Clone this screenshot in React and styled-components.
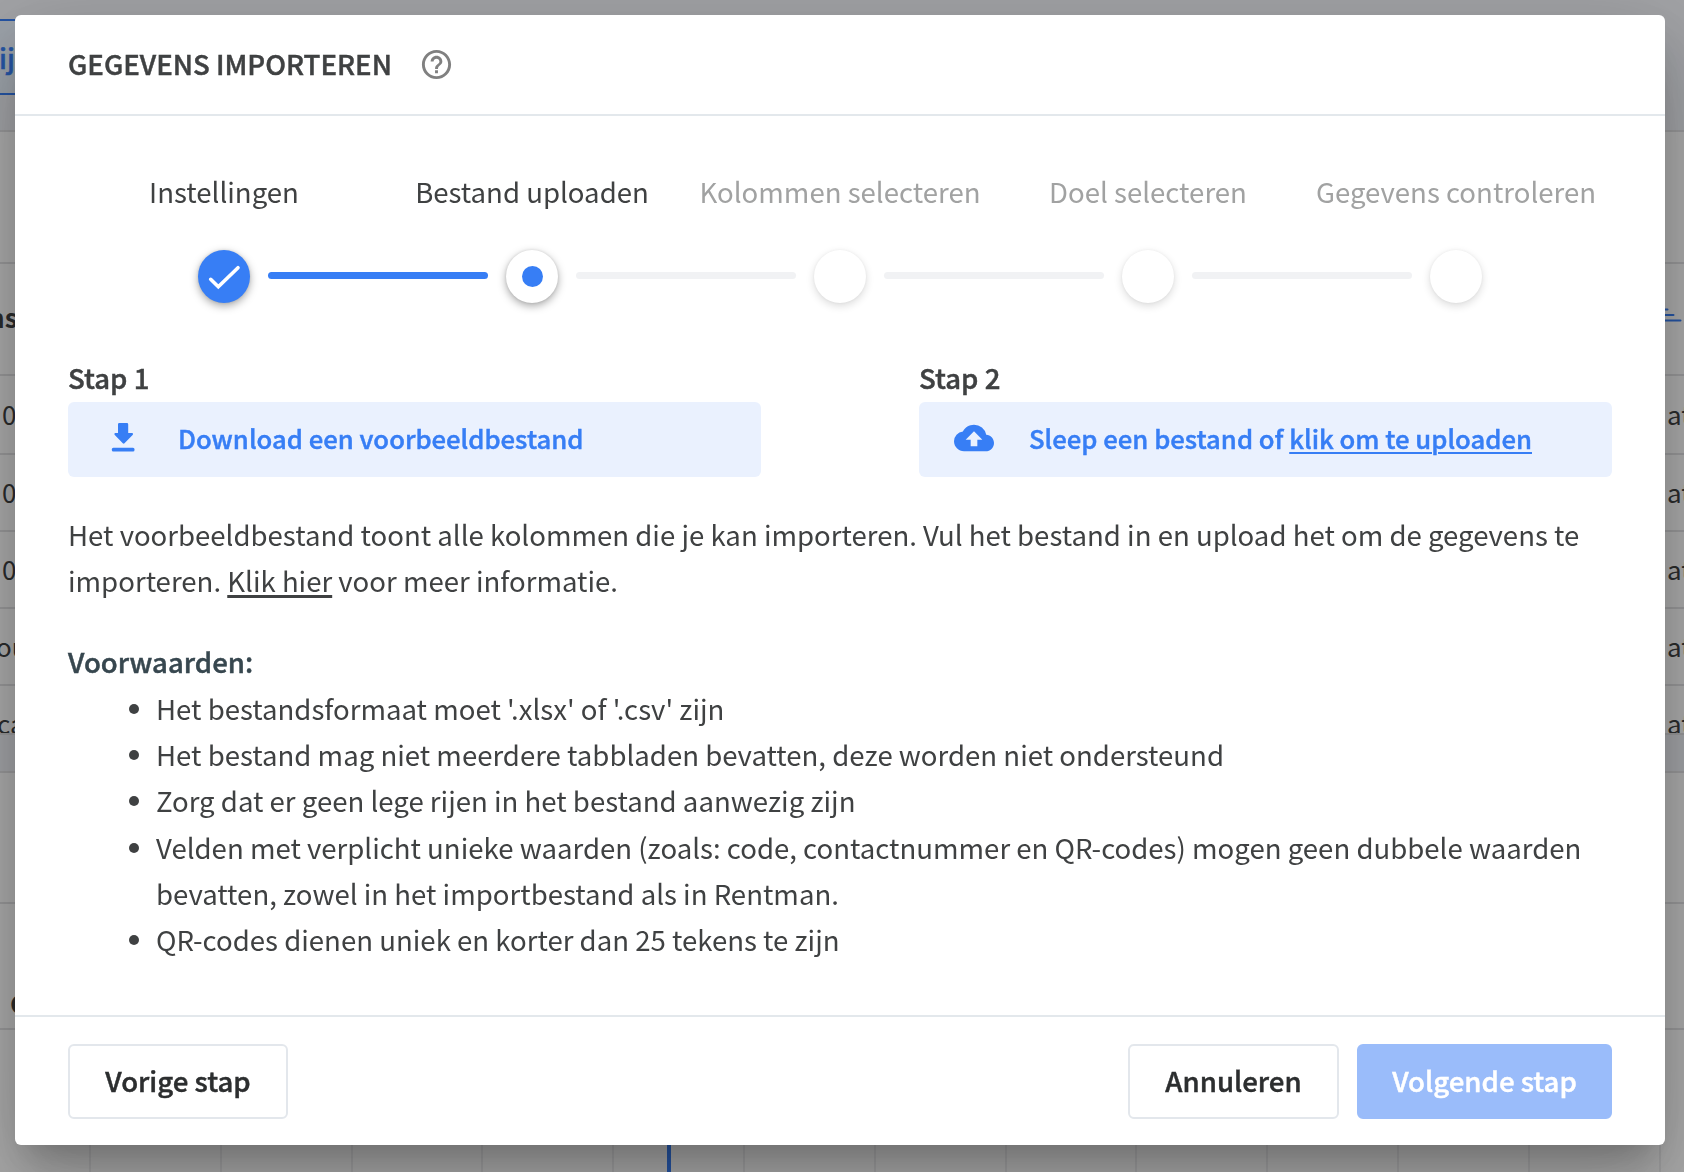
import React from "react";
import styled, { createGlobalStyle, css } from "styled-components";
import { MdHelpOutline, MdCloudUpload } from "react-icons/md";

const FONT = '"Noto Sans CJK SC", "Noto Sans", sans-serif';
const BLUE = "#377ef5";
const SIZE = "27.58px";

/* medium weight thickened slightly to a semibold */
const semibold = css`
  font-weight: 500;
  -webkit-text-stroke: 0.45px currentColor;
`;

const GlobalStyle = createGlobalStyle`
  * { box-sizing: border-box; }
  body { margin: 0; overflow: hidden; background: #fff; font-family: ${FONT}; font-size: ${SIZE}; color: #3f4142; }
`;

/* page underneath the dialog */
const Page = styled.div`
  width: 1684px;
  height: 1172px;
  display: flex;
  flex-direction: column;
  overflow: hidden;
  background: #fff;
`;
const Band = styled.div`
  flex: none;
  height: ${(p) => p.$h}px;
  display: flex;
  justify-content: space-between;
  align-items: ${(p) => p.$align || "center"};
  background: ${(p) => (p.$tint ? "#f1f3f8" : "#fff")};
  border-bottom: 2px solid #e2e2e4;
  overflow: hidden;
`;
const EdgeLeft = styled.span`
  margin: 0 0 ${(p) => p.$lift ?? 2}px ${(p) => p.$x}px;
  white-space: nowrap;
  font-weight: ${(p) => (p.$bold ? 700 : 400)};
  font-size: 26px;
`;
const EdgeRight = styled.span`
  width: 17px;
  margin-bottom: ${(p) => p.$lift ?? 2}px;
  white-space: nowrap;
  font-size: 26px;
`;
const GhostButton = styled.span`
  width: 60px;
  height: 76px;
  margin: 0 0 35px -45px;
  display: flex;
  align-items: center;
  justify-content: flex-end;
  border: 2px solid ${BLUE};
  border-right: 0;
  background: #eaf3fd;
  color: ${BLUE};
  ${semibold}
`;
const SortIcon = styled.svg`
  width: 19px;
  height: 16px;
  margin-bottom: 8px;
`;
const Timeline = styled.div`
  flex: 1;
  display: flex;
  padding-left: 89px;
`;
const TimeCell = styled.div`
  flex: none;
  width: 130.8px;
  border-left: 2px solid #eeeef0;
`;
const NowLine = styled.div`
  width: 4px;
  height: 100%;
  margin-left: ${(p) => p.$x}px;
  background: ${BLUE};
`;

/* dialog */
const Overlay = styled.div`
  position: fixed;
  inset: 0;
  padding: 15px 19px 27px 15px;
  display: flex;
  background: rgba(0, 0, 0, 0.33);
`;
const Dialog = styled.section`
  flex: 1;
  min-width: 0;
  display: flex;
  flex-direction: column;
  background: #fff;
  border-radius: 6px;
  box-shadow: 0 22px 30px -14px rgba(0, 0, 0, 0.2), 0 48px 76px 6px rgba(0, 0, 0, 0.14),
    0 18px 92px 16px rgba(0, 0, 0, 0.12);
`;
const Header = styled.header`
  height: 101px;
  padding: 0 53px 1px;
  display: flex;
  align-items: center;
  gap: 27px;
  border-bottom: 2px solid #e3e8ec;
`;
const Title = styled.h1`
  margin: 0;
  padding-bottom: 3px;
  font-size: ${SIZE};
  line-height: 40px;
  ${semibold}
`;
const HelpIcon = styled(MdHelpOutline)`
  width: 35px;
  height: 35px;
  color: #808080;
`;
const Body = styled.main`
  flex: 1;
  padding: 53px 53px 0;
`;
const Stepper = styled.ol`
  margin: 0 2px;
  padding: 0;
  list-style: none;
  display: grid;
  grid-template-columns: repeat(5, 308px);
`;
const Step = styled.li`
  display: flex;
  flex-direction: column;
  align-items: center;
  white-space: nowrap;
  color: ${(p) => (p.$muted ? "#a1a2a2" : "#3f4142")};
`;
const StepLabel = styled.span`
  height: 46px;
  line-height: 44px;
`;
const Track = styled.div`
  width: 308px;
  margin-top: 35px;
  height: 53px;
  display: grid;
  grid-template-columns: 110px 52px 110px;
  justify-content: space-between;
  align-items: center;
`;
const HalfLine = styled.i`
  height: 7px;
  margin-bottom: 2px;
  background: ${(p) => (p.$show ? (p.$done ? BLUE : "#f1f2f4") : "transparent")};
  border-radius: ${(p) => (p.$end ? "0 4px 4px 0" : "4px 0 0 4px")};
`;
const Dot = styled.div`
  width: 52px;
  height: 53px;
  display: flex;
  align-items: center;
  justify-content: center;
  border-radius: 50%;
  background: ${(p) => (p.$done ? BLUE : "#fff")};
  box-shadow: ${(p) =>
    p.$muted
      ? "0 3px 8px rgba(0,0,0,.14), 0 0 3px rgba(0,0,0,.05)"
      : "0 3px 9px rgba(0,0,0,.34), 0 0 3px rgba(0,0,0,.1)"};
`;
const ActiveDot = styled.i`
  width: 21px;
  height: 21px;
  border-radius: 50%;
  background: ${BLUE};
`;
const Check = styled.svg`
  width: 52px;
  height: 52px;
`;
const Columns = styled.div`
  margin-top: 53px;
  display: grid;
  grid-template-columns: 693px 693px;
  justify-content: space-between;
`;
const ColumnTitle = styled.div`
  height: 46px;
  line-height: 43px;
  ${semibold}
`;
const ActionBox = styled.div`
  height: 75px;
  padding: 0 0 4px 33px;
  display: flex;
  align-items: center;
  gap: 34px;
  border-radius: 6px;
  background: #eaf1fe;
  color: ${BLUE};
  font-size: 25.68px;
  white-space: nowrap;
  ${semibold}
`;
const IconSlot = styled.span`
  width: 43px;
  display: flex;
  justify-content: center;
`;
const Underlined = styled.span`
  text-decoration: underline;
  text-decoration-thickness: ${(p) => p.$thick || 2}px;
  text-underline-offset: 3px;
`;
const Paragraph = styled.p`
  margin: 34px 0 0;
  line-height: 46px;
  white-space: nowrap;
`;
const Subheading = styled.h2`
  margin: 35px 0 0;
  font-size: ${SIZE};
  line-height: 46px;
  color: #37474f;
  ${semibold}
`;
const List = styled.ul`
  margin: 1px 0 0;
  padding: 0 0 0 61px;
  list-style: none;
`;
const Item = styled.li`
  display: flex;
  gap: 17px;
  line-height: 46.2px;
  white-space: nowrap;
`;
const Bullet = styled.i`
  flex: none;
  width: 10px;
  height: 10px;
  margin-top: 19px;
  border-radius: 50%;
  background: #3f4142;
`;
const Footer = styled.footer`
  height: 130px;
  padding: 27px 53px 0;
  display: flex;
  align-items: flex-start;
  gap: 18px;
  border-top: 2px solid #e3e8ec;
`;
const Button = styled.button`
  width: ${(p) => p.$w}px;
  height: 75px;
  padding: 0 0 4px;
  margin-right: ${(p) => (p.$push ? "auto" : 0)};
  border: 2px solid ${(p) => (p.$primary ? "#9abcfa" : "#e3e7ec")};
  border-radius: 6px;
  background: ${(p) => (p.$primary ? "#9abcfa" : "#fff")};
  color: ${(p) => (p.$primary ? "#fff" : "#2c2e2f")};
  font-family: ${FONT};
  font-size: ${SIZE};
  line-height: 40px;
  white-space: nowrap;
  ${semibold}
`;

const STEPS = ["Instellingen", "Bestand uploaden", "Kolommen selecteren", "Doel selecteren", "Gegevens controleren"];
const CURRENT = 1;

const CONDITIONS = [
  ["Het bestandsformaat moet '.xlsx' of '.csv' zijn"],
  ["Het bestand mag niet meerdere tabbladen bevatten, deze worden niet ondersteund"],
  ["Zorg dat er geen lege rijen in het bestand aanwezig zijn"],
  [
    "Velden met verplicht unieke waarden (zoals: code, contactnummer en QR-codes) mogen geen dubbele waarden",
    "bevatten, zowel in het importbestand als in Rentman.",
  ],
  ["QR-codes dienen uniek en korter dan 25 tekens te zijn"],
];

const ROWS = [
  { h: 79, left: "0", x: 2 },
  { h: 77, left: "0", x: 2 },
  { h: 77, left: "0", x: 2 },
  { h: 77, left: "ou", x: -4 },
];

function Background() {
  return (
    <Page>
      <Band $h={132} $tint $align="flex-end">
        <GhostButton>ij</GhostButton>
      </Band>
      <Band $h={132} />
      <Band $h={112}>
        <EdgeLeft $bold $x={-12} $lift={6}>ns</EdgeLeft>
        <SortIcon viewBox="0 0 19 16" fill="none" stroke={BLUE} strokeWidth="2" strokeLinecap="round">
          <path d="M0 2.500H2.500M0 8H8.500M0 13.500H15.500" />
        </SortIcon>
      </Band>
      {ROWS.map((r, i) => (
        <Band key={i} $h={r.h}>
          <EdgeLeft $x={r.x}>{r.left}</EdgeLeft>
          <EdgeRight>at</EdgeRight>
        </Band>
      ))}
      <Band $h={49} $align="flex-end">
        <EdgeLeft $x={-3} $lift={-8}>ca</EdgeLeft>
        <EdgeRight $lift={-8}>at</EdgeRight>
      </Band>
      <Band $h={38} $tint />
      <Band $h={131} />
      <Band $h={126} $align="flex-end">
        <EdgeLeft $bold $x={10} $lift={7}>C</EdgeLeft>
      </Band>
      <Timeline>
        {Array.from({ length: 13 }, (_, i) => (
          <TimeCell key={i}>{i === 4 && <NowLine $x={53} />}</TimeCell>
        ))}
      </Timeline>
    </Page>
  );
}

export default function App() {
  return (
    <>
      <GlobalStyle />
      <Background />
      <Overlay>
        <Dialog>
          <Header>
            <Title>GEGEVENS IMPORTEREN</Title>
            <HelpIcon />
          </Header>
          <Body>
            <Stepper>
              {STEPS.map((label, i) => (
                <Step key={label} $muted={i > CURRENT}>
                  <StepLabel>{label}</StepLabel>
                  <Track>
                    <HalfLine $end $show={i > 0} $done={i <= CURRENT} />
                    <Dot $done={i < CURRENT} $muted={i > CURRENT}>
                      {i < CURRENT && (
                        <Check viewBox="0 0 52 52" fill="none" stroke="#fff" strokeWidth="3.6" strokeLinecap="round">
                          <path d="M12.7 28.3L20.3 35.8L40 16.7" />
                        </Check>
                      )}
                      {i === CURRENT && <ActiveDot />}
                    </Dot>
                    <HalfLine $show={i < STEPS.length - 1} $done={i < CURRENT} />
                  </Track>
                </Step>
              ))}
            </Stepper>
            <Columns>
              <div>
                <ColumnTitle>Stap 1</ColumnTitle>
                <ActionBox>
                  <IconSlot>
                    <svg width="24" height="30" viewBox="0 0 24 30" fill={BLUE}>
                      <path d="M8.300 0h7.600a1.300 1.300 0 0 1 1.300 1.300V10h3.600c1.200 0 1.600 1.200.8 2L13.500 20.200a1.200 1.200 0 0 1-1.700 0L3.800 12c-.8-.8-.4-2 .8-2H7V1.300A1.300 1.300 0 0 1 8.300 0z" />
                      <rect x="0.800" y="24.800" width="22.700" height="3.700" rx="1.500" />
                    </svg>
                  </IconSlot>
                  <span>Download een voorbeeldbestand</span>
                </ActionBox>
              </div>
              <div>
                <ColumnTitle>Stap 2</ColumnTitle>
                <ActionBox>
                  <IconSlot>
                    <MdCloudUpload size={40} />
                  </IconSlot>
                  <span>
                    Sleep een bestand of <Underlined>klik om te uploaden</Underlined>
                  </span>
                </ActionBox>
              </div>
            </Columns>
            <Paragraph>
              Het voorbeeldbestand toont alle kolommen die je kan importeren. Vul het bestand in en upload het om de gegevens te
              <br />
              importeren. <Underlined $thick={3}>Klik hier</Underlined> voor meer informatie.
            </Paragraph>
            <Subheading>Voorwaarden:</Subheading>
            <List>
              {CONDITIONS.map((lines) => (
                <Item key={lines[0]}>
                  <Bullet />
                  <div>
                    {lines.map((line) => (
                      <div key={line}>{line}</div>
                    ))}
                  </div>
                </Item>
              ))}
            </List>
          </Body>
          <Footer>
            <Button $w={220} $push>Vorige stap</Button>
            <Button $w={211}>Annuleren</Button>
            <Button $w={255} $primary>Volgende stap</Button>
          </Footer>
        </Dialog>
      </Overlay>
    </>
  );
}
